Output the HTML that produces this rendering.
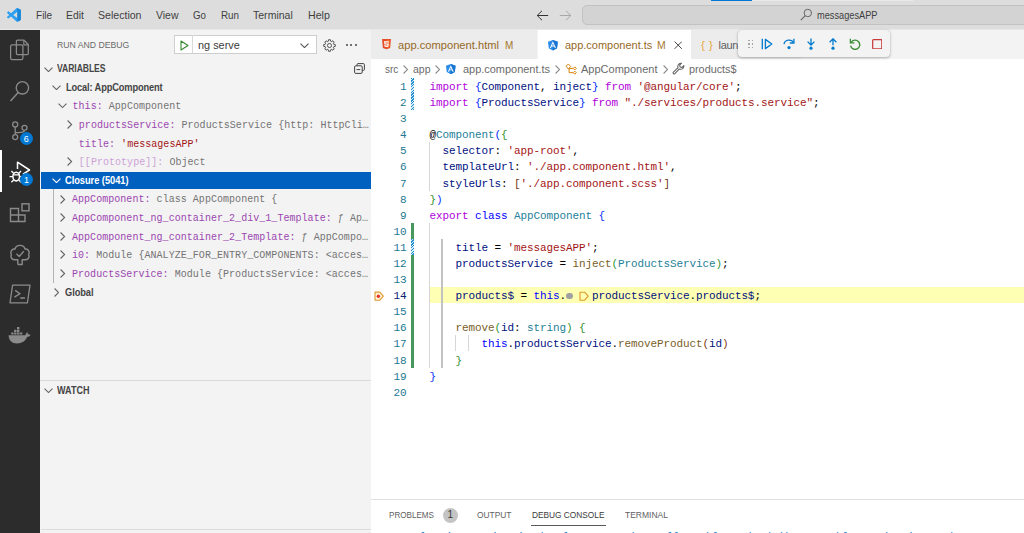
<!DOCTYPE html><html><head><meta charset="utf-8"><title>app.component.ts - messagesAPP</title><style>html,body{margin:0;padding:0}body{width:1024px;height:533px;overflow:hidden;position:relative;background:#fff;font-family:"Liberation Sans",sans-serif}#r{position:absolute;left:0;top:0;width:1024px;height:533px;overflow:hidden}#r>div,#r>svg,#r>span{position:absolute;display:block}#r>span{white-space:pre;line-height:16px;height:16px}.s{font-family:"Liberation Sans",sans-serif}.m{font-family:"Liberation Mono",monospace}</style></head><body><div id="r">
<div style="left:0px;top:0px;width:1024px;height:30px;background:#dddddd;"></div>
<div style="left:0px;top:29px;width:1024px;height:1px;background:#e8e8e8;"></div>
<div style="left:752px;top:0px;width:161px;height:1px;background:#e9e9e9;"></div>
<div style="left:711px;top:0px;width:41px;height:1px;background:#0078d4;"></div>
<div style="left:0px;top:30px;width:40px;height:503px;background:#2c2c2c;"></div>
<div style="left:40px;top:30px;width:331px;height:503px;background:#f3f3f3;"></div>
<div style="left:371px;top:30px;width:653px;height:29px;background:#f3f3f3;"></div>
<svg style="left:7.3px;top:8px;" width="13.8" height="13.8" viewBox="0 0 100 100"><path fill="#2c9ff0" fill-rule="evenodd" d="M96.5 10.8 L75.9 0.9 c-2.4-1.1-5.2-0.7-7.1 1.2 L29.4 38 L12.2 25 c-1.6-1.2-3.8-1.1-5.3 0.2 L1.4 30.2 c-1.8 1.7-1.8 4.5 0 6.2 L16.3 50 L1.4 63.6 c-1.8 1.7-1.8 4.5 0 6.2 l5.5 5 c1.5 1.4 3.7 1.5 5.3 0.2 L29.4 62 l39.4 35.9 c1.9 1.9 4.7 2.3 7.1 1.2 l20.6-9.9 c2.2-1 3.5-3.2 3.5-5.6 V16.4 c0-2.4-1.4-4.6-3.5-5.6 z M75 72.7 L45.1 50 L75 27.3 v45.4 z"/><path fill="#1a86d8" d="M75 1 L96.5 10.8 c2.1 1 3.5 3.2 3.5 5.6 V83.6 c0 2.4-1.3 4.6-3.5 5.6 L75.9 99.1 L75 99 Z"/></svg>
<span id="t0" class="s" style="left:35.8px;top:7.2px;font-size:11.2px;color:#3f3f3f;transform:scaleX(0.8984);transform-origin:0 0;">File</span>
<span id="t1" class="s" style="left:66px;top:7.2px;font-size:11.2px;color:#3f3f3f;transform:scaleX(0.9232);transform-origin:0 0;">Edit</span>
<span id="t2" class="s" style="left:98px;top:7.2px;font-size:11.2px;color:#3f3f3f;transform:scaleX(0.9450);transform-origin:0 0;">Selection</span>
<span id="t3" class="s" style="left:156px;top:7.2px;font-size:11.2px;color:#3f3f3f;transform:scaleX(0.9357);transform-origin:0 0;">View</span>
<span id="t4" class="s" style="left:192.8px;top:7.2px;font-size:11.2px;color:#3f3f3f;transform:scaleX(0.8703);transform-origin:0 0;">Go</span>
<span id="t5" class="s" style="left:220.6px;top:7.2px;font-size:11.2px;color:#3f3f3f;transform:scaleX(0.8767);transform-origin:0 0;">Run</span>
<span id="t6" class="s" style="left:253px;top:7.2px;font-size:11.2px;color:#3f3f3f;transform:scaleX(0.9413);transform-origin:0 0;">Terminal</span>
<span id="t7" class="s" style="left:307.8px;top:7.2px;font-size:11.2px;color:#3f3f3f;transform:scaleX(0.9515);transform-origin:0 0;">Help</span>
<svg style="left:536px;top:10px;" width="13" height="11" viewBox="0 0 13 11"><path d="M6 0.8 L1.2 5.5 L6 10.2 M1.2 5.5 H12.2" fill="none" stroke="#333" stroke-width="1"/></svg>
<svg style="left:559px;top:10px;" width="13" height="11" viewBox="0 0 13 11"><path d="M7 0.8 L11.8 5.5 L7 10.2 M11.8 5.5 H0.8" fill="none" stroke="#a8a8a8" stroke-width="1"/></svg>
<div style="left:582px;top:5px;width:460px;height:18px;background:#d3d3d3;border:1px solid #c2c2c2;border-radius:5px"></div>
<svg style="left:800px;top:8.2px;" width="13" height="13" viewBox="0 0 13 13"><circle cx="7.8" cy="5" r="3.7" fill="none" stroke="#666" stroke-width="1"/><path d="M5.2 7.7 L0.8 12.2" stroke="#666" stroke-width="1.1"/></svg>
<span id="t8" class="s" style="left:816.5px;top:7.6px;font-size:10.3px;color:#404040;transform:scaleX(0.8957);transform-origin:0 0;">messagesAPP</span>
<svg style="left:9px;top:38px;" width="22" height="23" viewBox="0 0 22 23"><path d="M8.5 2.2 H15 L19.3 6.5 V15.5 Q19.3 16.6 18.2 16.6 H8.5 Q7.4 16.6 7.4 15.5 V3.3 Q7.4 2.2 8.5 2.2 Z" fill="none" stroke="#8b8b8b" stroke-width="1.25" stroke-linejoin="round"/><path d="M14.8 2.4 V6.8 H19.2" fill="none" stroke="#8b8b8b" stroke-width="1.15"/><rect x="1.6" y="6.9" width="12.3" height="14.8" rx="1.7" fill="none" stroke="#8b8b8b" stroke-width="1.25"/></svg>
<svg style="left:9px;top:79px;" width="22" height="23" viewBox="0 0 22 23"><circle cx="13.4" cy="8.8" r="6.2" fill="none" stroke="#8b8b8b" stroke-width="1.35"/><path d="M9.2 13.4 L1.5 22" stroke="#8b8b8b" stroke-width="1.45"/></svg>
<svg style="left:9px;top:119px;" width="22" height="23" viewBox="0 0 22 23"><circle cx="6.2" cy="5.4" r="2.5" fill="none" stroke="#8b8b8b" stroke-width="1.3"/><circle cx="6.2" cy="18.1" r="2.5" fill="none" stroke="#8b8b8b" stroke-width="1.3"/><circle cx="15.5" cy="8.8" r="2.5" fill="none" stroke="#8b8b8b" stroke-width="1.3"/><path d="M6.2 7.9 V15.6 M15.5 11.3 C15.5 13.8 12 13.4 6.2 13.7" fill="none" stroke="#8b8b8b" stroke-width="1.3"/></svg>
<div style="left:19.5px;top:131.5px;width:13.5px;height:13.5px;border-radius:7px;background:#0078d4"></div>
<span id="t9" class="s" style="left:23.7px;top:130.6px;font-size:9px;color:#fff;">6</span>
<div style="left:0px;top:150px;width:2px;height:42px;background:#ffffff;"></div>
<svg style="left:8px;top:160px;" width="24" height="24" viewBox="0 0 24 24"><path d="M9.5 9 V2.2 L21.5 10 L15 14.2" fill="none" stroke="#fff" stroke-width="1.5" stroke-linejoin="round"/><ellipse cx="8.2" cy="16.6" rx="3.3" ry="4.3" fill="none" stroke="#fff" stroke-width="1.5"/><path d="M5.6 13.2 L3.4 11 M10.8 13.2 L13 11 M4.9 16.6 H1.6 M11.5 16.6 H14.6 M5.6 20 L3.4 22.2 M10.8 20 L13 22.2 M5.5 14.8 H11" fill="none" stroke="#fff" stroke-width="1.3"/></svg>
<div style="left:19.5px;top:172.5px;width:13.5px;height:13.5px;border-radius:7px;background:#0078d4"></div>
<span id="t10" class="s" style="left:23.9px;top:171.6px;font-size:9px;color:#fff;">1</span>
<svg style="left:9px;top:202px;" width="22" height="22" viewBox="0 0 22 22"><path d="M1.5 6.5 H9.5 V19.5 H1.5 Z M1.5 13 H16 V19.5 H9.5 M9.5 13 V19.5 M16 13 V19.5 H9.5" fill="none" stroke="#8b8b8b" stroke-width="1.4"/><rect x="13" y="1.8" width="7" height="7" fill="none" stroke="#8b8b8b" stroke-width="1.4"/></svg>
<svg style="left:9px;top:243px;" width="22" height="23" viewBox="0 0 22 23"><path d="M8.8 21.5 V16.8 H6.2 C2.8 16.8 1.2 14.3 2.4 11.8 C0.6 7.6 4 5.6 6 6 C7.2 1.2 14.8 1.2 16 6 C18 5.6 21.4 7.6 19.6 11.8 C20.8 14.3 19.2 16.8 15.8 16.8 H13.2 V21.5 H8.8" fill="none" stroke="#8b8b8b" stroke-width="1.4" stroke-linejoin="round"/><path d="M7.5 10.8 L10.2 13.4 L14.8 8.2" fill="none" stroke="#8b8b8b" stroke-width="1.4"/></svg>
<svg style="left:9px;top:284px;" width="22" height="20" viewBox="0 0 22 20"><path d="M3.6 1.2 H21 L18.4 18.8 H1 Z" fill="none" stroke="#8b8b8b" stroke-width="1.3" stroke-linejoin="round"/><path d="M6.2 6.4 L10.8 9.8 L5.4 13.2 M11.2 14 H16" fill="none" stroke="#8b8b8b" stroke-width="1.4"/></svg>
<svg style="left:8px;top:327px;" width="23" height="17" viewBox="0 0 23 17"><path d="M0.6 8.2 H17.4 C17.8 6.6 18.6 5.6 19.6 5.2 C20 6 20 6.8 19.8 7.4 C20.8 7.2 21.8 7.4 22.6 8 C21.8 9.4 20.4 9.8 19.2 9.8 C17.6 14 14 16.4 9 16.4 C4 16.4 0.8 13.6 0.6 8.2 Z" fill="#8b8b8b"/><path d="M3.2 5.4h2.4v2.2H3.2z M6.1 5.4h2.4v2.2H6.1z M9 5.4h2.4v2.2H9z M11.9 5.4h2.4v2.2h-2.4z M6.1 2.7h2.4v2.2H6.1z M9 2.7h2.4v2.2H9z M9 0h2.4v2.2H9z" fill="#8b8b8b"/></svg>
<span id="t11" class="s" style="left:57px;top:37.2px;font-size:9.5px;color:#6a6a6a;transform:scaleX(0.9130);transform-origin:0 0;">RUN AND DEBUG</span>
<div style="left:173.5px;top:34.6px;width:141px;height:17px;background:#fff;border:1px solid #cecece;box-sizing:content-box"></div>
<div style="left:191.5px;top:35px;width:1px;height:18px;background:#d8d8d8;"></div>
<svg style="left:179.5px;top:39.5px;" width="9" height="11" viewBox="0 0 9 11"><path d="M1 1 L8 5.5 L1 10 Z" fill="none" stroke="#388a34" stroke-width="1.1" stroke-linejoin="round"/></svg>
<span id="t12" class="s" style="left:197.5px;top:37.2px;font-size:11.2px;color:#3b3b3b;transform:scaleX(0.9739);transform-origin:0 0;">ng serve</span>
<svg style="left:299.5px;top:42.8px;" width="9" height="5.4" viewBox="0 0 9 5.4"><path d="M0.5 0.6 L4.5 4.6 L8.5 0.6" fill="none" stroke="#555" stroke-width="1.1"/></svg>
<svg style="left:323.2px;top:38.5px;" width="13" height="13" viewBox="0 0 16 16"><path d="M15.10 6.82 L15.10 9.18 L13.33 9.37 L12.73 10.80 L13.86 12.19 L12.19 13.86 L10.80 12.73 L9.37 13.33 L9.18 15.10 L6.82 15.10 L6.63 13.33 L5.20 12.73 L3.81 13.86 L2.14 12.19 L3.27 10.80 L2.67 9.37 L0.90 9.18 L0.90 6.82 L2.67 6.63 L3.27 5.20 L2.14 3.81 L3.81 2.14 L5.20 3.27 L6.63 2.67 L6.82 0.90 L9.18 0.90 L9.37 2.67 L10.80 3.27 L12.19 2.14 L13.86 3.81 L12.73 5.20 L13.33 6.63 Z" fill="none" stroke="#4a4a4a" stroke-width="1.15" stroke-linejoin="round"/><circle cx="8" cy="8" r="2.5" fill="none" stroke="#4a4a4a" stroke-width="1.15"/></svg>
<div style="left:346px;top:44.3px;width:2px;height:2px;border-radius:1px;background:#444"></div>
<div style="left:350.3px;top:44.3px;width:2px;height:2px;border-radius:1px;background:#444"></div>
<div style="left:354.6px;top:44.3px;width:2px;height:2px;border-radius:1px;background:#444"></div>
<svg style="left:44.0px;top:66.5px;" width="9" height="5.4" viewBox="0 0 9 5.4"><path d="M0.5 0.6 L4.5 4.6 L8.5 0.6" fill="none" stroke="#636363" stroke-width="1.1"/></svg>
<span id="t13" class="s" style="left:57px;top:61.0px;font-size:10px;color:#454545;font-weight:bold;letter-spacing:-0.081px;transform:scaleX(0.8600);transform-origin:0 0;">VARIABLES</span>
<svg style="left:354px;top:62.7px;" width="11" height="11" viewBox="0 0 11 11"><path d="M3 2.6 V1.6 Q3 0.6 4 0.6 H9.4 Q10.4 0.6 10.4 1.6 V6.4 Q10.4 7.4 9.4 7.4 H8.2" fill="none" stroke="#424242" stroke-width="1"/><rect x="0.6" y="2.8" width="7.6" height="7.6" rx="1.2" fill="none" stroke="#424242" stroke-width="1"/><path d="M2.5 6.6 H6.3" stroke="#424242" stroke-width="1"/></svg>
<svg style="left:51.8px;top:85.0px;" width="9" height="5.4" viewBox="0 0 9 5.4"><path d="M0.5 0.6 L4.5 4.6 L8.5 0.6" fill="none" stroke="#636363" stroke-width="1.1"/></svg>
<span id="t14" class="s" style="left:65.8px;top:79.2px;font-size:10.8px;color:#454545;font-weight:bold;letter-spacing:-0.162px;transform:scaleX(0.8600);transform-origin:0 0;">Local: AppComponent</span>
<svg style="left:57.8px;top:103.4px;" width="9" height="5.4" viewBox="0 0 9 5.4"><path d="M0.5 0.6 L4.5 4.6 L8.5 0.6" fill="none" stroke="#636363" stroke-width="1.1"/></svg>
<span id="t15" class="m" style="left:72.5px;top:99.35px;font-size:10px;color:#333;letter-spacing:0.041px;"><span style="color:#9b46b0">this:</span><span style="color:#737373"> AppComponent</span></span>
<svg style="left:67.3px;top:120.2px;" width="5.4" height="9" viewBox="0 0 5.4 9"><path d="M0.6 0.5 L4.6 4.5 L0.6 8.5" fill="none" stroke="#636363" stroke-width="1.1"/></svg>
<span id="t16" class="m" style="left:78.8px;top:117.95px;font-size:10px;color:#333;letter-spacing:0.040px;"><span style="color:#9b46b0">productsService:</span><span style="color:#737373"> ProductsService {http: HttpCli…</span></span>
<span id="t17" class="m" style="left:78.8px;top:136.55px;font-size:10px;color:#333;letter-spacing:0.040px;"><span style="color:#9b46b0">title:</span><span style="color:#a31515"> &#x27;messagesAPP&#x27;</span></span>
<svg style="left:67.3px;top:157.4px;" width="5.4" height="9" viewBox="0 0 5.4 9"><path d="M0.6 0.5 L4.6 4.5 L0.6 8.5" fill="none" stroke="#636363" stroke-width="1.1"/></svg>
<span id="t18" class="m" style="left:78.8px;top:155.15px;font-size:10px;color:#333;letter-spacing:0.040px;"><span style="color:#cda2d7">[[Prototype]]:</span><span style="color:#737373"> Object</span></span>
<div style="left:41px;top:172px;width:330px;height:17px;background:#0060c0;"></div>
<svg style="left:51.8px;top:178.0px;" width="9" height="5.4" viewBox="0 0 9 5.4"><path d="M0.5 0.6 L4.5 4.6 L8.5 0.6" fill="none" stroke="#fff" stroke-width="1.1"/></svg>
<span id="t19" class="s" style="left:65.3px;top:172.2px;font-size:10.8px;color:#fff;font-weight:bold;letter-spacing:-0.045px;transform:scaleX(0.8600);transform-origin:0 0;">Closure (5041)</span>
<div style="left:53px;top:189px;width:1px;height:94px;background:#b4b4b4;"></div>
<svg style="left:60.3px;top:194.6px;" width="5.4" height="9" viewBox="0 0 5.4 9"><path d="M0.6 0.5 L4.6 4.5 L0.6 8.5" fill="none" stroke="#636363" stroke-width="1.1"/></svg>
<span id="t20" class="m" style="left:72px;top:192.35px;font-size:10px;color:#333;letter-spacing:0.040px;"><span style="color:#9b46b0">AppComponent:</span><span style="color:#737373"> class AppComponent {</span></span>
<svg style="left:60.3px;top:213.2px;" width="5.4" height="9" viewBox="0 0 5.4 9"><path d="M0.6 0.5 L4.6 4.5 L0.6 8.5" fill="none" stroke="#636363" stroke-width="1.1"/></svg>
<span id="t21" class="m" style="left:72px;top:210.95px;font-size:10px;color:#333;letter-spacing:0.040px;"><span style="color:#9b46b0">AppComponent_ng_container_2_div_1_Template:</span><span style="color:#737373"> ƒ Ap…</span></span>
<svg style="left:60.3px;top:231.8px;" width="5.4" height="9" viewBox="0 0 5.4 9"><path d="M0.6 0.5 L4.6 4.5 L0.6 8.5" fill="none" stroke="#636363" stroke-width="1.1"/></svg>
<span id="t22" class="m" style="left:72px;top:229.55px;font-size:10px;color:#333;letter-spacing:0.040px;"><span style="color:#9b46b0">AppComponent_ng_container_2_Template:</span><span style="color:#737373"> ƒ AppCompo…</span></span>
<svg style="left:60.3px;top:250.4px;" width="5.4" height="9" viewBox="0 0 5.4 9"><path d="M0.6 0.5 L4.6 4.5 L0.6 8.5" fill="none" stroke="#636363" stroke-width="1.1"/></svg>
<span id="t23" class="m" style="left:72px;top:248.15px;font-size:10px;color:#333;letter-spacing:0.040px;"><span style="color:#9b46b0">i0:</span><span style="color:#737373"> Module {ANALYZE_FOR_ENTRY_COMPONENTS: &lt;acces…</span></span>
<svg style="left:60.3px;top:269.0px;" width="5.4" height="9" viewBox="0 0 5.4 9"><path d="M0.6 0.5 L4.6 4.5 L0.6 8.5" fill="none" stroke="#636363" stroke-width="1.1"/></svg>
<span id="t24" class="m" style="left:72px;top:266.75px;font-size:10px;color:#333;letter-spacing:0.040px;"><span style="color:#9b46b0">ProductsService:</span><span style="color:#737373"> Module {ProductsService: &lt;acces…</span></span>
<svg style="left:53.6px;top:287.6px;" width="5.4" height="9" viewBox="0 0 5.4 9"><path d="M0.6 0.5 L4.6 4.5 L0.6 8.5" fill="none" stroke="#636363" stroke-width="1.1"/></svg>
<span id="t25" class="s" style="left:65.3px;top:283.8px;font-size:10.8px;color:#454545;font-weight:bold;letter-spacing:-0.091px;transform:scaleX(0.8600);transform-origin:0 0;">Global</span>
<div style="left:40px;top:380px;width:331px;height:1px;background:#dadada;"></div>
<svg style="left:44.0px;top:388.3px;" width="9" height="5.4" viewBox="0 0 9 5.4"><path d="M0.5 0.6 L4.5 4.6 L8.5 0.6" fill="none" stroke="#636363" stroke-width="1.1"/></svg>
<span id="t26" class="s" style="left:57px;top:383.0px;font-size:10px;color:#454545;font-weight:bold;transform:scaleX(0.9047);transform-origin:0 0;">WATCH</span>
<div style="left:41px;top:529px;width:330px;height:1px;background:#dcdcdc;"></div>
<div style="left:371px;top:30px;width:166px;height:29px;background:#ececec;"></div>
<div style="left:537px;top:30px;width:1px;height:29px;background:#f3f3f3;"></div>
<div style="left:537.5px;top:30px;width:153px;height:30px;background:#ffffff;"></div>
<div style="left:691px;top:30px;width:110px;height:29px;background:#ececec;"></div>
<svg style="left:382.2px;top:39.4px;" width="9" height="10.3" viewBox="0 0 19 22"><path d="M0 0 H19 L17.3 19.3 L9.5 22 L1.7 19.3 Z" fill="#e44d26"/><path d="M9.5 1.8 V20.3 L15.8 18.1 L17.2 1.8 Z" fill="#f16529"/><path d="M4.2 4.6 H14.8 L14.6 7.3 H7.2 L7.4 9.4 H14.4 L13.8 15.8 L9.5 17.2 L5.2 15.8 L5 12.6 H7.6 L7.7 14 L9.5 14.6 L11.3 14 L11.5 12 H4.9 Z" fill="#fff"/></svg>
<span id="t27" class="s" style="left:398.3px;top:37.2px;font-size:11.2px;color:#96691f;transform:scaleX(0.9963);transform-origin:0 0;">app.component.html</span>
<span id="t28" class="s" style="left:505px;top:37.2px;font-size:11.2px;color:#a5792d;transform:scaleX(0.8898);transform-origin:0 0;">M</span>
<svg style="left:547.8px;top:40.2px;" width="9.8" height="10.486" viewBox="0 0 30 32"><path d="M15 0 L0 5.3 L2.3 25.1 L15 32 L27.7 25.1 L30 5.3 Z" fill="#2a8be8"/><path d="M15 0 V32 L27.7 25.1 L30 5.3 Z" fill="#1976d2"/><path d="M15 3.6 L5.7 24.4 H9.2 L11 19.7 H19 L20.8 24.4 H24.3 Z M15 10.6 L17.8 16.9 H12.2 Z" fill="#fff" fill-rule="evenodd"/></svg>
<span id="t29" class="s" style="left:565px;top:37.2px;font-size:11.2px;color:#96691f;transform:scaleX(0.9816);transform-origin:0 0;">app.component.ts</span>
<span id="t30" class="s" style="left:657.3px;top:37.2px;font-size:11.2px;color:#a5792d;transform:scaleX(0.9327);transform-origin:0 0;">M</span>
<svg style="left:674px;top:41.2px;" width="8.4" height="8.4" viewBox="0 0 8.4 8.4"><path d="M0.6 0.6 L7.8 7.8 M7.8 0.6 L0.6 7.8" stroke="#424242" stroke-width="1"/></svg>
<span id="t31" class="s" style="left:700.5px;top:37.0px;font-size:11px;color:#eaa83c;letter-spacing:0.363px;transform:scaleX(1.0600);transform-origin:0 0;">{ }</span>
<span id="t32" class="s" style="left:718.5px;top:37.2px;font-size:11px;color:#5f5f5f;letter-spacing:-0.300px;">launch.json</span>
<div style="left:738px;top:30px;width:152px;height:27px;background:#f3f3f3;border-radius:4px;box-shadow:0 1px 3px rgba(0,0,0,0.28),0 0 1px rgba(0,0,0,0.2)"></div>
<div style="left:748.3px;top:39.9px;width:1.4px;height:1.4px;background:#a6a6a6;"></div>
<div style="left:748.3px;top:43.3px;width:1.4px;height:1.4px;background:#a6a6a6;"></div>
<div style="left:748.3px;top:46.7px;width:1.4px;height:1.4px;background:#a6a6a6;"></div>
<div style="left:751.8px;top:39.9px;width:1.4px;height:1.4px;background:#a6a6a6;"></div>
<div style="left:751.8px;top:43.3px;width:1.4px;height:1.4px;background:#a6a6a6;"></div>
<div style="left:751.8px;top:46.7px;width:1.4px;height:1.4px;background:#a6a6a6;"></div>
<svg style="left:761px;top:37.5px;" width="12" height="12" viewBox="0 0 12 12"><path d="M1.3 0.8 V11.2" stroke="#007acc" stroke-width="1.3"/><path d="M4.4 1.4 L10.8 6 L4.4 10.6 Z" fill="none" stroke="#007acc" stroke-width="1.3" stroke-linejoin="round"/></svg>
<svg style="left:782.5px;top:37.5px;" width="12" height="12" viewBox="0 0 12 12"><path d="M1 6.2 C1.8 1.2 8.6 0.8 10.6 4.8" fill="none" stroke="#007acc" stroke-width="1.3"/><path d="M10.9 0.8 V5 H6.8" fill="none" stroke="#007acc" stroke-width="1.3"/><circle cx="6" cy="9.6" r="1.6" fill="#007acc"/></svg>
<svg style="left:805px;top:37.5px;" width="12" height="12" viewBox="0 0 12 12"><path d="M6 0.4 V6.6 M2.6 3.6 L6 7 L9.4 3.6" fill="none" stroke="#007acc" stroke-width="1.3"/><circle cx="6" cy="10.2" r="1.6" fill="#007acc"/></svg>
<svg style="left:827px;top:37.5px;" width="12" height="12" viewBox="0 0 12 12"><path d="M6 7.2 V1 M2.6 4.2 L6 0.8 L9.4 4.2" fill="none" stroke="#007acc" stroke-width="1.3"/><circle cx="6" cy="10.2" r="1.6" fill="#007acc"/></svg>
<svg style="left:849px;top:37.5px;" width="12" height="12" viewBox="0 0 12 12"><path d="M2.2 4.4 A4.6 4.6 0 1 1 1.6 7.6" fill="none" stroke="#388a34" stroke-width="1.3"/><path d="M1.4 0.8 V4.8 H5.4" fill="none" stroke="#388a34" stroke-width="1.3"/></svg>
<svg style="left:871.7px;top:38.6px;" width="10.5" height="10.5" viewBox="0 0 11 11"><rect x="0.7" y="0.7" width="9.6" height="9.6" rx="0.8" fill="none" stroke="#c93b3b" stroke-width="1.3"/></svg>
<span id="t33" class="s" style="left:385px;top:61.3px;font-size:11.2px;color:#6a6a6a;transform:scaleX(0.8913);transform-origin:0 0;">src</span>
<svg style="left:403.0px;top:64.5px;" width="5.4" height="9" viewBox="0 0 5.4 9"><path d="M0.6 0.5 L4.6 4.5 L0.6 8.5" fill="none" stroke="#8a8a8a" stroke-width="1.1"/></svg>
<span id="t34" class="s" style="left:412.5px;top:61.3px;font-size:11.2px;color:#6a6a6a;transform:scaleX(0.9372);transform-origin:0 0;">app</span>
<svg style="left:434.5px;top:64.5px;" width="5.4" height="9" viewBox="0 0 5.4 9"><path d="M0.6 0.5 L4.6 4.5 L0.6 8.5" fill="none" stroke="#8a8a8a" stroke-width="1.1"/></svg>
<svg style="left:446.3px;top:64.2px;" width="9.6" height="10.272" viewBox="0 0 30 32"><path d="M15 0 L0 5.3 L2.3 25.1 L15 32 L27.7 25.1 L30 5.3 Z" fill="#2a8be8"/><path d="M15 0 V32 L27.7 25.1 L30 5.3 Z" fill="#1976d2"/><path d="M15 3.6 L5.7 24.4 H9.2 L11 19.7 H19 L20.8 24.4 H24.3 Z M15 10.6 L17.8 16.9 H12.2 Z" fill="#fff" fill-rule="evenodd"/></svg>
<span id="t35" class="s" style="left:463px;top:61.3px;font-size:11.2px;color:#6a6a6a;transform:scaleX(0.9782);transform-origin:0 0;">app.component.ts</span>
<svg style="left:555.0px;top:64.5px;" width="5.4" height="9" viewBox="0 0 5.4 9"><path d="M0.6 0.5 L4.6 4.5 L0.6 8.5" fill="none" stroke="#8a8a8a" stroke-width="1.1"/></svg>
<svg style="left:564.6px;top:62.6px;" width="12.4" height="12.4" viewBox="0 0 16 16"><path fill="none" stroke="#d67e00" stroke-width="1.25" d="M4.3 1.3 L7.4 4.4 L4.3 7.5 L1.2 4.4 Z M5.3 6.6 V12.5 H10.6 M5.3 7 H10.6 M12.6 5 L14.6 7 L12.6 9 L10.6 7 Z M12.6 10.5 L14.6 12.5 L12.6 14.5 L10.6 12.5 Z"/></svg>
<span id="t36" class="s" style="left:581.3px;top:61.3px;font-size:11.2px;color:#6a6a6a;transform:scaleX(0.9839);transform-origin:0 0;">AppComponent</span>
<svg style="left:663.0px;top:64.5px;" width="5.4" height="9" viewBox="0 0 5.4 9"><path d="M0.6 0.5 L4.6 4.5 L0.6 8.5" fill="none" stroke="#8a8a8a" stroke-width="1.1"/></svg>
<svg style="left:671.6px;top:62px;" width="13" height="13" viewBox="0 0 16 16"><path fill="none" stroke="#616161" stroke-width="1.3" stroke-linejoin="round" d="M14.6 4.4 A4 4 0 0 1 9.1 8.6 L3.6 14.3 A1.2 1.2 0 0 1 1.8 12.5 L7.5 7 A4 4 0 0 1 11.7 1.5 L9.4 3.8 L10 6.1 L12.3 6.7 Z"/></svg>
<span id="t37" class="s" style="left:688.5px;top:61.3px;font-size:11.2px;color:#6a6a6a;transform:scaleX(0.9666);transform-origin:0 0;">products$</span>
<div style="left:429.5px;top:287px;width:595px;height:16px;background:#ffffb3;"></div>
<span id="t38" class="m" style="left:400.0px;top:79.0px;font-size:11px;color:#237893;letter-spacing:-0.109px;">1</span>
<span id="t39" class="m" style="left:400.0px;top:95.09px;font-size:11px;color:#237893;letter-spacing:-0.109px;">2</span>
<span id="t40" class="m" style="left:400.0px;top:111.18px;font-size:11px;color:#237893;letter-spacing:-0.109px;">3</span>
<span id="t41" class="m" style="left:400.0px;top:127.27px;font-size:11px;color:#237893;letter-spacing:-0.109px;">4</span>
<span id="t42" class="m" style="left:400.0px;top:143.36px;font-size:11px;color:#237893;letter-spacing:-0.109px;">5</span>
<span id="t43" class="m" style="left:400.0px;top:159.45px;font-size:11px;color:#237893;letter-spacing:-0.109px;">6</span>
<span id="t44" class="m" style="left:400.0px;top:175.54px;font-size:11px;color:#237893;letter-spacing:-0.109px;">7</span>
<span id="t45" class="m" style="left:400.0px;top:191.63px;font-size:11px;color:#237893;letter-spacing:-0.109px;">8</span>
<span id="t46" class="m" style="left:400.0px;top:207.72px;font-size:11px;color:#237893;letter-spacing:-0.109px;">9</span>
<span id="t47" class="m" style="left:393.5px;top:223.81px;font-size:11px;color:#237893;letter-spacing:-0.203px;">10</span>
<span id="t48" class="m" style="left:393.5px;top:239.9px;font-size:11px;color:#237893;letter-spacing:-0.203px;">11</span>
<span id="t49" class="m" style="left:393.5px;top:255.99px;font-size:11px;color:#237893;letter-spacing:-0.203px;">12</span>
<span id="t50" class="m" style="left:393.5px;top:272.08px;font-size:11px;color:#237893;letter-spacing:-0.203px;">13</span>
<span id="t51" class="m" style="left:393.5px;top:288.17px;font-size:11px;color:#0b216f;letter-spacing:-0.203px;">14</span>
<span id="t52" class="m" style="left:393.5px;top:304.26px;font-size:11px;color:#237893;letter-spacing:-0.203px;">15</span>
<span id="t53" class="m" style="left:393.5px;top:320.35px;font-size:11px;color:#237893;letter-spacing:-0.203px;">16</span>
<span id="t54" class="m" style="left:393.5px;top:336.44px;font-size:11px;color:#237893;letter-spacing:-0.203px;">17</span>
<span id="t55" class="m" style="left:393.5px;top:352.53px;font-size:11px;color:#237893;letter-spacing:-0.203px;">18</span>
<span id="t56" class="m" style="left:393.5px;top:368.62px;font-size:11px;color:#237893;letter-spacing:-0.203px;">19</span>
<span id="t57" class="m" style="left:393.5px;top:384.71px;font-size:11px;color:#237893;letter-spacing:-0.203px;">20</span>
<div style="left:411px;top:78px;width:3px;height:32px;background:repeating-linear-gradient(135deg,#2090d3 0,#2090d3 1px,#d6ebf8 1px,#d6ebf8 2px);"></div>
<div style="left:411px;top:223px;width:3px;height:145px;background:#48985d;"></div>
<div style="left:411px;top:238.5px;width:3px;height:16px;background:repeating-linear-gradient(135deg,#2090d3 0,#2090d3 1px,#d6ebf8 1px,#d6ebf8 2px);"></div>
<div style="left:429px;top:142px;width:1px;height:49px;background:#d6d6d6;"></div>
<div style="left:429px;top:223px;width:1px;height:145px;background:#d6d6d6;"></div>
<div style="left:441px;top:239px;width:2px;height:129px;background:#c2c2c2;"></div>
<div style="left:455px;top:335px;width:1px;height:16px;background:#d6d6d6;"></div>
<div style="left:468px;top:335px;width:1px;height:16px;background:#d6d6d6;"></div>
<span id="t58" class="m" style="left:429.6px;top:79.0px;font-size:11px;color:#333;letter-spacing:-0.105px;"><span style="color:#af00db">import</span><span style="color:#000000"> </span><span style="color:#0431fa">{</span><span style="color:#001080">Component</span><span style="color:#000000">, </span><span style="color:#001080">inject</span><span style="color:#0431fa">}</span><span style="color:#000000"> </span><span style="color:#af00db">from</span><span style="color:#000000"> </span><span style="color:#a31515">&#x27;@angular/core&#x27;</span><span style="color:#000000">;</span></span>
<span id="t59" class="m" style="left:429.6px;top:95.09px;font-size:11px;color:#333;letter-spacing:-0.104px;"><span style="color:#af00db">import</span><span style="color:#000000"> </span><span style="color:#0431fa">{</span><span style="color:#001080">ProductsService</span><span style="color:#0431fa">}</span><span style="color:#000000"> </span><span style="color:#af00db">from</span><span style="color:#000000"> </span><span style="color:#a31515">&quot;./services/products.service&quot;</span><span style="color:#000000">;</span></span>
<span id="t60" class="m" style="left:429.6px;top:127.27px;font-size:11px;color:#333;letter-spacing:-0.114px;"><span style="color:#000000">@</span><span style="color:#267f99">Component</span><span style="color:#0431fa">(</span><span style="color:#319331">{</span></span>
<span id="t61" class="m" style="left:429.6px;top:143.36px;font-size:11px;color:#333;letter-spacing:-0.107px;"><span style="color:#001080">  selector</span><span style="color:#000000">: </span><span style="color:#a31515">&#x27;app-root&#x27;</span><span style="color:#000000">,</span></span>
<span id="t62" class="m" style="left:429.6px;top:159.45px;font-size:11px;color:#333;letter-spacing:-0.105px;"><span style="color:#001080">  templateUrl</span><span style="color:#000000">: </span><span style="color:#a31515">&#x27;./app.component.html&#x27;</span><span style="color:#000000">,</span></span>
<span id="t63" class="m" style="left:429.6px;top:175.54px;font-size:11px;color:#333;letter-spacing:-0.105px;"><span style="color:#001080">  styleUrls</span><span style="color:#000000">: </span><span style="color:#7b3814">[</span><span style="color:#a31515">&#x27;./app.component.scss&#x27;</span><span style="color:#7b3814">]</span></span>
<span id="t64" class="m" style="left:429.6px;top:191.63px;font-size:11px;color:#333;letter-spacing:-0.219px;"><span style="color:#319331">}</span><span style="color:#0431fa">)</span></span>
<span id="t65" class="m" style="left:429.6px;top:207.72px;font-size:11px;color:#333;letter-spacing:-0.107px;"><span style="color:#af00db">export</span><span style="color:#000000"> </span><span style="color:#0000ff">class</span><span style="color:#000000"> </span><span style="color:#267f99">AppComponent</span><span style="color:#000000"> </span><span style="color:#0431fa">{</span></span>
<span id="t66" class="m" style="left:429.6px;top:239.9px;font-size:11px;color:#333;letter-spacing:-0.107px;"><span style="color:#001080">    title</span><span style="color:#000000"> = </span><span style="color:#a31515">&#x27;messagesAPP&#x27;</span><span style="color:#000000">;</span></span>
<span id="t67" class="m" style="left:429.6px;top:255.99px;font-size:11px;color:#333;letter-spacing:-0.105px;"><span style="color:#001080">    productsService</span><span style="color:#000000"> = </span><span style="color:#795e26">inject</span><span style="color:#319331">(</span><span style="color:#267f99">ProductsService</span><span style="color:#319331">)</span><span style="color:#000000">;</span></span>
<span id="t68" class="m" style="left:429.6px;top:288.17px;font-size:11px;color:#333;letter-spacing:-0.108px;"><span style="color:#001080">    products$</span><span style="color:#000000"> = </span><span style="color:#0000ff">this</span><span style="color:#000000">.</span></span>
<span id="t69" class="m" style="left:429.6px;top:320.35px;font-size:11px;color:#333;letter-spacing:-0.107px;"><span style="color:#795e26">    remove</span><span style="color:#319331">(</span><span style="color:#001080">id</span><span style="color:#000000">: </span><span style="color:#267f99">string</span><span style="color:#319331">)</span><span style="color:#000000"> </span><span style="color:#319331">{</span></span>
<span id="t70" class="m" style="left:429.6px;top:336.44px;font-size:11px;color:#333;letter-spacing:-0.105px;"><span style="color:#0000ff">        this</span><span style="color:#000000">.</span><span style="color:#001080">productsService</span><span style="color:#000000">.</span><span style="color:#795e26">removeProduct</span><span style="color:#7b3814">(</span><span style="color:#001080">id</span><span style="color:#7b3814">)</span></span>
<span id="t71" class="m" style="left:429.6px;top:352.53px;font-size:11px;color:#333;letter-spacing:-0.129px;"><span style="color:#319331">    }</span></span>
<span id="t72" class="m" style="left:429.6px;top:368.62px;font-size:11px;color:#333;letter-spacing:-0.109px;"><span style="color:#0431fa">}</span></span>
<span id="t73" class="m" style="left:592px;top:288.17px;font-size:11px;color:#333;letter-spacing:-0.107px;"><span style="color:#001080">productsService</span><span style="color:#000000">.</span><span style="color:#001080">products$</span><span style="color:#000000">;</span></span>
<div style="left:566.2px;top:292.8px;width:6.4px;height:6.4px;border-radius:3.2px;background:#a0a0a0"></div>
<svg style="left:578.7px;top:290.6px;" width="10" height="10.4" viewBox="0 0 10 10"><path d="M1 1 H5.6 L9.2 5 L5.6 9 H1 Z" fill="none" stroke="#dd9a2e" stroke-width="1.1" stroke-linejoin="round"/></svg>
<svg style="left:373.6px;top:290.6px;" width="10.2" height="10.4" viewBox="0 0 10 10"><path d="M1 1 H5.6 L9.2 5 L5.6 9 H1 Z" fill="#fff4d6" stroke="#e09a33" stroke-width="1.1" stroke-linejoin="round"/><circle cx="4.3" cy="5" r="1.7" fill="#e2362c"/></svg>
<div style="left:371px;top:499px;width:653px;height:1px;background:#e0e0e0;"></div>
<span id="t74" class="s" style="left:388.5px;top:507.3px;font-size:9.4px;color:#616161;transform:scaleX(0.8636);transform-origin:0 0;">PROBLEMS</span>
<div style="left:442.8px;top:507.7px;width:15px;height:15px;border-radius:7.5px;background:#c4c4c4"></div>
<span id="t75" class="s" style="left:447.6px;top:507.3px;font-size:10px;color:#3a3a3a;">1</span>
<span id="t76" class="s" style="left:476.5px;top:507.3px;font-size:9.4px;color:#616161;transform:scaleX(0.8950);transform-origin:0 0;">OUTPUT</span>
<span id="t77" class="s" style="left:531.5px;top:507.3px;font-size:9.4px;color:#3b3b3b;transform:scaleX(0.8863);transform-origin:0 0;">DEBUG CONSOLE</span>
<div style="left:530.5px;top:525px;width:75px;height:1px;background:#5a5a5a;"></div>
<span id="t78" class="s" style="left:624.5px;top:507.3px;font-size:9.4px;color:#616161;transform:scaleX(0.9071);transform-origin:0 0;">TERMINAL</span>
<span id="t79" class="m" style="left:394px;top:528.5px;font-size:11px;color:#1a85d6;letter-spacing:-0.100px;">Angular is running in development mode. Call enableProdMode() to enable production mode.</span>
</div></body></html>
